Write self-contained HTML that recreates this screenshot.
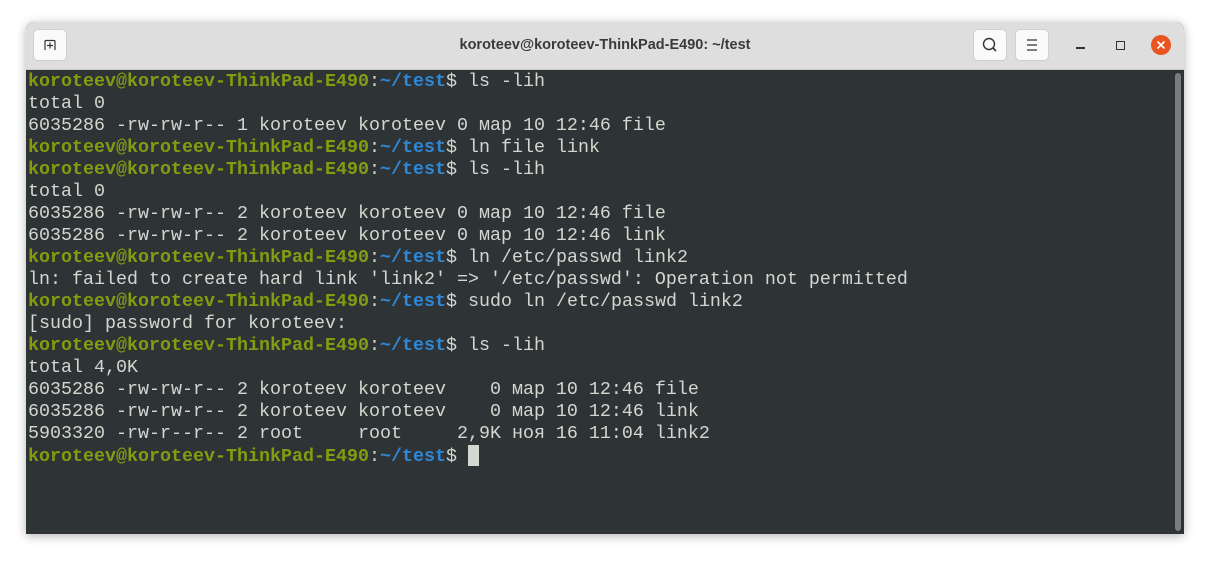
<!DOCTYPE html>
<html><head><meta charset="utf-8"><style>
body{margin:0;width:1210px;height:563px;background:#fff;position:relative;overflow:hidden;font-family:"Liberation Sans","DejaVu Sans",sans-serif}
.win{position:absolute;left:26px;top:22px;width:1158px;height:512px;border-radius:8px 8px 0 0;overflow:hidden;box-shadow:0 2px 10px rgba(0,0,0,.3);background:#2e3436}
.tb{position:absolute;left:0;top:0;width:100%;height:47px;background:#dedede;border-bottom:1px solid #c8c8c8}
.btn{position:absolute;top:7px;width:34px;height:32px;background:#fafafa;border:1px solid #cfcfcf;border-radius:5px;box-sizing:border-box}
.title{position:absolute;left:0;width:100%;top:15px;text-align:center;font-weight:bold;font-size:14.5px;color:#3a3a3a}
.term{position:absolute;left:2px;top:49px;font-family:"Liberation Mono",monospace;font-size:18.33px;line-height:22px;color:#d3d7cf;white-space:pre}
.g{color:#859b10;font-weight:bold}.b{color:#2f87d6;font-weight:bold}
.sb{position:absolute;left:1149px;top:51px;width:6px;height:458px;background:#7a7c7d;border-radius:3px}
.cur{display:inline-block;width:11px;height:21px;background:#d3d7cf;vertical-align:-5px}
</style></head><body>
<div class="win">
<div class="tb">
<div class="btn" style="left:7px"><svg width="34" height="32" style="position:absolute;left:-1px;top:-1px"><path d="M12 21V12.5q0-1 1-1h8q1 0 1 1V21" fill="none" stroke="#333" stroke-width="1.2"/><path d="M17 13.5v6M14 16.5h6" stroke="#333" stroke-width="1.2"/></svg></div>
<div class="title">koroteev@koroteev-ThinkPad-E490: ~/test</div>
<div class="btn" style="left:947px"><svg width="34" height="32" style="position:absolute;left:-1px;top:-1px"><circle cx="16" cy="15" r="5.5" fill="none" stroke="#333" stroke-width="1.4"/><path d="M20 19l3 3" stroke="#333" stroke-width="1.6"/></svg></div>
<div class="btn" style="left:989px"><svg width="34" height="32" style="position:absolute;left:-1px;top:-1px"><path d="M12 11h10M12 16h10M12 21h10" stroke="#333" stroke-width="1.2"/></svg></div>
<div style="position:absolute;left:1050px;top:25px;width:9px;height:1.5px;background:#333"></div>
<div style="position:absolute;left:1090px;top:19px;width:7px;height:7px;border:1.3px solid #333"></div>
<div style="position:absolute;left:1125px;top:13px;width:20px;height:20px;border-radius:50%;background:#e95420"><svg width="20" height="20"><path d="M6.5 6.5l7 7M13.5 6.5l-7 7" stroke="#fff" stroke-width="1.6"/></svg></div>
</div>
<div class="term"><span class="g">koroteev@koroteev-ThinkPad-E490</span>:<span class="b">~/test</span>$ ls -lih
total 0
6035286 -rw-rw-r-- 1 koroteev koroteev 0 мар 10 12:46 file
<span class="g">koroteev@koroteev-ThinkPad-E490</span>:<span class="b">~/test</span>$ ln file link
<span class="g">koroteev@koroteev-ThinkPad-E490</span>:<span class="b">~/test</span>$ ls -lih
total 0
6035286 -rw-rw-r-- 2 koroteev koroteev 0 мар 10 12:46 file
6035286 -rw-rw-r-- 2 koroteev koroteev 0 мар 10 12:46 link
<span class="g">koroteev@koroteev-ThinkPad-E490</span>:<span class="b">~/test</span>$ ln /etc/passwd link2
ln: failed to create hard link 'link2' =&gt; '/etc/passwd': Operation not permitted
<span class="g">koroteev@koroteev-ThinkPad-E490</span>:<span class="b">~/test</span>$ sudo ln /etc/passwd link2
[sudo] password for koroteev: 
<span class="g">koroteev@koroteev-ThinkPad-E490</span>:<span class="b">~/test</span>$ ls -lih
total 4,0K
6035286 -rw-rw-r-- 2 koroteev koroteev    0 мар 10 12:46 file
6035286 -rw-rw-r-- 2 koroteev koroteev    0 мар 10 12:46 link
5903320 -rw-r--r-- 2 root     root     2,9K ноя 16 11:04 link2
<span class="g">koroteev@koroteev-ThinkPad-E490</span>:<span class="b">~/test</span>$ <span class="cur"></span></div>
<div class="sb"></div>
</div>
</body></html>
